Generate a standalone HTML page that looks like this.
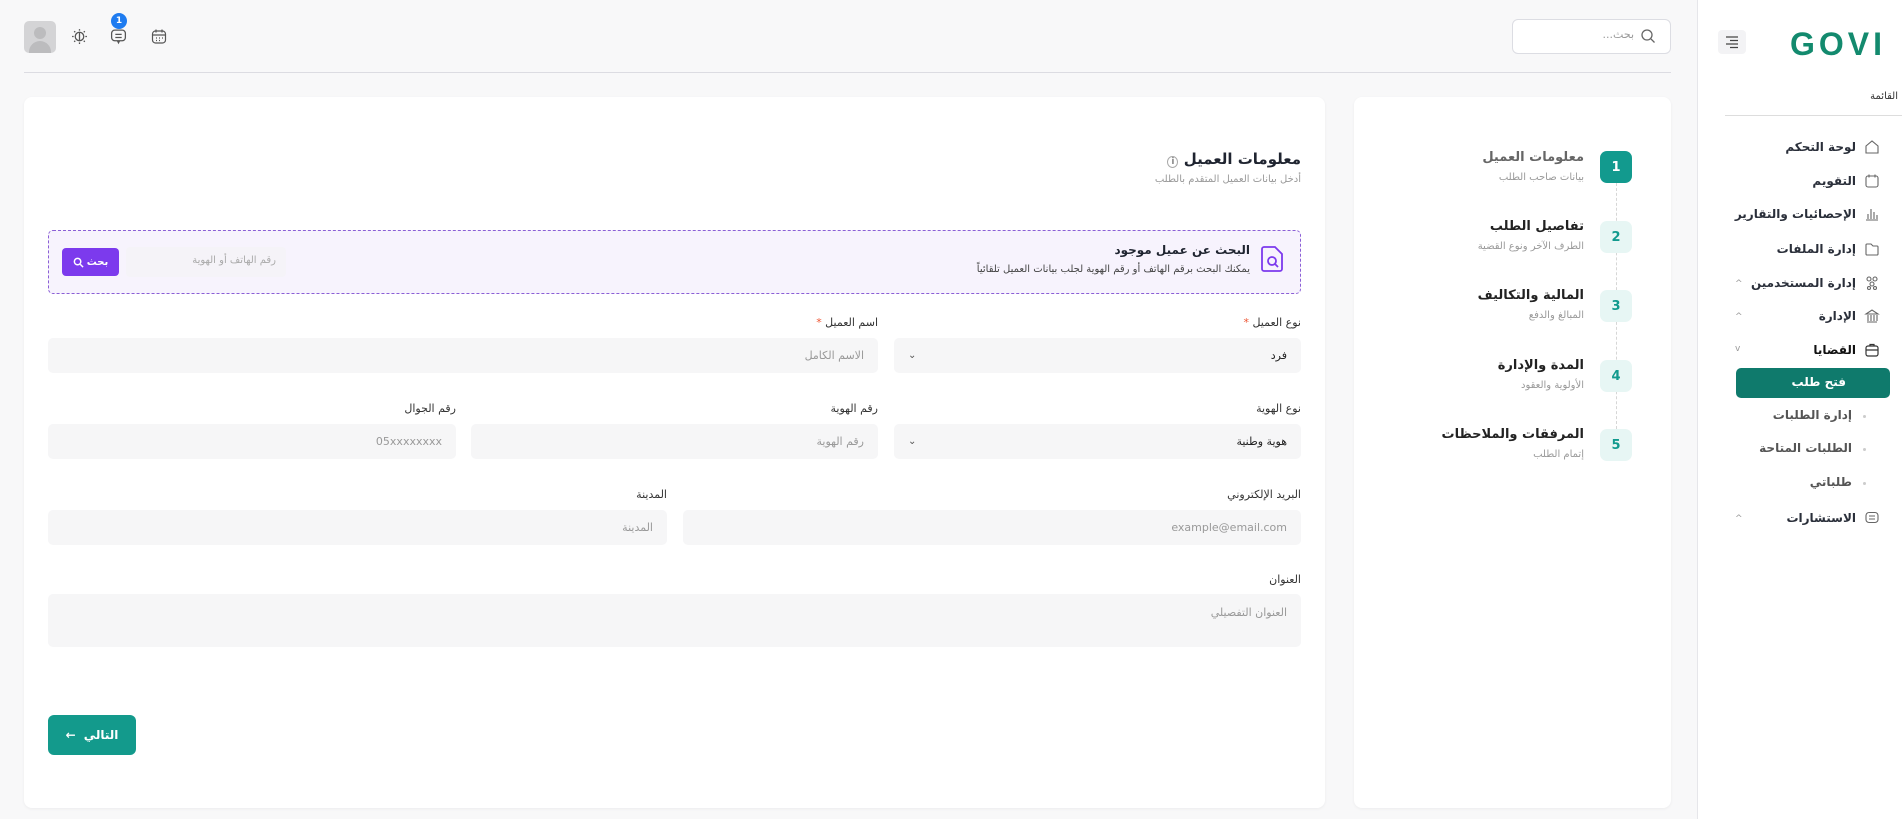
<!DOCTYPE html>
<html lang="ar" dir="rtl"><head><meta charset="utf-8">
<style>
*{box-sizing:border-box;margin:0;padding:0}
body{width:1902px;height:819px;overflow:hidden;background:#f8f8f9;font-family:"DejaVu Sans","Liberation Sans",sans-serif;color:#1f2430;position:relative}
.abs{position:absolute}
.sidebar{left:1697px;top:0;width:205px;height:819px;background:#fff;border-left:1px solid #e6e6ea}
.mi{position:absolute;right:22px;font-size:12px;font-weight:bold;color:#2a2f3a;display:flex;align-items:center;gap:8px;direction:rtl}
.mi svg{width:16px;height:16px}
.chev{position:absolute;left:1735px;font-size:9px;color:#999}
.sub{position:absolute;right:50px;font-size:12px;color:#555;font-weight:bold}
.sub:before{content:"";position:absolute;right:-14px;top:7px;width:3px;height:3px;border-radius:50%;background:#ccc}
.card{background:#fff;border-radius:8px;box-shadow:0 1px 3px rgba(0,0,0,.05)}
.lbl{position:absolute;font-size:11px;color:#333;text-align:right}
.inp{position:absolute;background:#f6f6f7;border-radius:5px;height:35px;font-size:11px;color:#999;padding:0 14px;display:flex;align-items:center}
.step{position:absolute;width:32px;height:32px;border-radius:7px;background:#e7f6f4;color:#129a8e;font-size:13px;font-weight:bold;display:flex;align-items:center;justify-content:center}
.st{position:absolute;right:318px;text-align:right}
.st b{display:block;font-size:13px;color:#222}
.st span{font-size:10px;color:#999}
.req{color:#e53}
</style></head><body>

<!-- top bar -->
<div class="abs" style="left:24px;top:72px;width:1647px;height:1px;background:#dcdce2"></div>
<div class="abs" style="left:1512px;top:19px;width:159px;height:35px;border:1px solid #dcdde3;border-radius:6px;background:#fff"></div>
<svg class="abs" style="left:1640px;top:28px" width="16" height="16" viewBox="0 0 16 16" fill="none" stroke="#666" stroke-width="1.3"><circle cx="7" cy="7" r="5"/><path d="M11 11l3.5 3.5"/></svg>
<div class="abs" style="right:268px;top:28px;font-size:11px;color:#999">بحث...</div>
<div class="abs" style="left:24px;top:21px;width:32px;height:32px;border-radius:5px;background:#d4d4d6;overflow:hidden"><div style="position:absolute;left:10px;top:6px;width:12px;height:12px;border-radius:50%;background:#bcbcbe"></div><div style="position:absolute;left:5px;top:20px;width:22px;height:16px;border-radius:11px 11px 0 0;background:#bcbcbe"></div></div>
<svg class="abs" style="left:71px;top:28px" width="17" height="17" viewBox="0 0 16 16" fill="none" stroke="#555" stroke-width="1.2"><circle cx="8" cy="8" r="4"/><path d="M8 4v8" /><path d="M8 1v1.5M8 13.5V15M1 8h1.5M13.5 8H15M3 3l1 1M12 12l1 1M3 13l1-1M12 4l1-1"/></svg>
<svg class="abs" style="left:110px;top:28px" width="17" height="18" viewBox="0 0 16 17" fill="none" stroke="#555" stroke-width="1.2"><rect x="1.5" y="2" width="13" height="10" rx="3"/><path d="M5 6h6M5 9h6M7 12l1 2 1-2"/></svg>
<div class="abs" style="left:111px;top:13px;width:16px;height:16px;border-radius:50%;background:#1f7cf0;color:#fff;font-size:9px;font-weight:bold;text-align:center;line-height:16px">1</div>
<svg class="abs" style="left:151px;top:28px" width="16" height="17" viewBox="0 0 16 17" fill="none" stroke="#555" stroke-width="1.2"><rect x="1.5" y="3" width="13" height="12" rx="3"/><path d="M1.5 7h13M5 1.5v3M11 1.5v3M5 10h1M8 10h1M11 10h1M5 12.5h1M8 12.5h1"/></svg>

<!-- sidebar -->
<div class="abs sidebar"></div>
<div class="abs" style="left:1718px;top:30px;width:28px;height:24px;background:#f3f3f5;border-radius:4px"></div>
<svg class="abs" style="left:1724px;top:35px" width="16" height="14" viewBox="0 0 16 14" stroke="#444" stroke-width="1.2"><path d="M2 2h12M6 5.5h8M2 9h12M6 12.5h8"/></svg>
<div class="abs" style="left:1790px;top:26px;font-family:'Liberation Sans',sans-serif;font-size:32px;letter-spacing:4px;color:#138a6e;font-weight:bold;direction:ltr;line-height:36px">GOVI</div>
<div class="abs" style="right:4px;top:91px;font-size:10px;color:#333">القائمة</div>
<div class="abs" style="left:1725px;top:115px;width:177px;height:1px;background:#ddd"></div>
<div class="mi" style="top:139px">
<svg viewBox="0 0 16 16" fill="none" stroke="#666" stroke-width="1.1"><path d="M2 7l6-5 6 5v7H2z"/></svg>لوحة التحكم</div>
<div class="mi" style="top:173px"><svg viewBox="0 0 16 16" fill="none" stroke="#666" stroke-width="1.1"><rect x="2" y="3" width="12" height="11" rx="2"/><path d="M5 1.5v3M11 1.5v3"/></svg>التقويم</div>
<div class="mi" style="top:206px"><svg viewBox="0 0 16 16" fill="none" stroke="#666" stroke-width="1.1"><path d="M2 14h12M4 13V8M7 13V3M10 13V6M13 13V9"/></svg>الإحصائيات والتقارير</div>
<div class="mi" style="top:241px"><svg viewBox="0 0 16 16" fill="none" stroke="#666" stroke-width="1.1"><path d="M2 4a1 1 0 011-1h4l2 2h4a1 1 0 011 1v7a1 1 0 01-1 1H3a1 1 0 01-1-1z"/></svg>إدارة الملفات</div>
<div class="mi" style="top:275px"><svg viewBox="0 0 16 16" fill="none" stroke="#666" stroke-width="1.1"><circle cx="5" cy="4" r="2"/><circle cx="11" cy="4" r="2"/><circle cx="8" cy="9" r="2"/><circle cx="5" cy="13" r="1.5"/><circle cx="11" cy="13" r="1.5"/></svg>إدارة المستخدمين</div><div class="chev" style="top:279px">^</div>
<div class="mi" style="top:308px"><svg viewBox="0 0 16 16" fill="none" stroke="#666" stroke-width="1.1"><path d="M2 6l6-4 6 4zM3 14h10M4 7v6M7 7v6M10 7v6M13 7v6"/></svg>الإدارة</div><div class="chev" style="top:312px">^</div>
<div class="mi" style="top:342px;color:#111"><svg viewBox="0 0 16 16" fill="none" stroke="#333" stroke-width="1.2"><rect x="2" y="4" width="12" height="10" rx="2"/><path d="M6 4V2.5h4V4M2 8h12"/></svg>القضايا</div><div class="chev" style="top:344px">v</div>
<div class="abs" style="left:1736px;top:368px;width:154px;height:30px;background:#0f7a6c;border-radius:5px"></div>
<div class="abs" style="right:56px;top:375px;color:#fff;font-size:12px;font-weight:bold">فتح طلب</div>
<div class="sub" style="top:408px">إدارة الطلبات</div>
<div class="sub" style="top:441px">الطلبات المتاحة</div>
<div class="sub" style="top:475px">طلباتي</div>
<div class="mi" style="top:510px"><svg viewBox="0 0 16 16" fill="none" stroke="#666" stroke-width="1.1"><rect x="2" y="2.5" width="12" height="10" rx="3"/><path d="M5 6h6M5 9h6"/></svg>الاستشارات</div><div class="chev" style="top:514px">^</div>

<!-- steps card -->
<div class="abs card" style="left:1354px;top:97px;width:317px;height:711px"></div>
<div class="abs" style="left:1616px;top:183px;width:0;height:246px;border-left:1px dashed #d6d6d6"></div>
<div class="step" style="left:1600px;top:151px;background:#129a8e;color:#fff">1</div>
<div class="step" style="left:1600px;top:221px">2</div>
<div class="step" style="left:1600px;top:290px">3</div>
<div class="step" style="left:1600px;top:360px">4</div>
<div class="step" style="left:1600px;top:429px">5</div>
<div class="st" style="top:150px"><b style="color:#666">معلومات العميل</b><span>بيانات صاحب الطلب</span></div>
<div class="st" style="top:219px"><b>تفاصيل الطلب</b><span>الطرف الآخر ونوع القضية</span></div>
<div class="st" style="top:288px"><b>المالية والتكاليف</b><span>المبالغ والدفع</span></div>
<div class="st" style="top:358px"><b>المدة والإدارة</b><span>الأولوية والعقود</span></div>
<div class="st" style="top:427px"><b>المرفقات والملاحظات</b><span>إتمام الطلب</span></div>

<!-- main card -->
<div class="abs card" style="left:24px;top:97px;width:1301px;height:711px"></div>
<div class="abs" style="right:601px;top:150px;font-size:15px;font-weight:bold">معلومات العميل <span style="font-size:9px;color:#888;border:1px solid #aaa;border-radius:50%;padding:0 3px">i</span></div>
<div class="abs" style="right:601px;top:174px;font-size:10px;color:#999">أدخل بيانات العميل المتقدم بالطلب</div>

<div class="abs" style="left:48px;top:230px;width:1253px;height:64px;border:1px dashed #8b5fd6;border-radius:5px;background:#f7f3fd"></div>
<svg class="abs" style="left:1260px;top:244px" width="26" height="30" viewBox="0 0 26 30" fill="none" stroke="#7c3aed" stroke-width="1.8"><path d="M4 3h11l7 7v15a2 2 0 01-2 2H4a2 2 0 01-2-2V5a2 2 0 012-2z"/><circle cx="12" cy="17" r="4"/><path d="M15 20l3 3"/></svg>
<div class="abs" style="right:652px;top:243px;font-size:12px;font-weight:bold">البحث عن عميل موجود</div>
<div class="abs" style="right:652px;top:264px;font-size:10px;color:#444">يمكنك البحث برقم الهاتف أو رقم الهوية لجلب بيانات العميل تلقائياً</div>
<div class="abs" style="left:126px;top:247px;width:160px;height:30px;background:#f5f3f8;border-radius:4px"></div>
<div class="abs" style="right:1626px;top:255px;font-size:10px;color:#aaa">رقم الهاتف أو الهوية</div>
<div class="abs" style="left:62px;top:248px;width:57px;height:28px;background:#7c3aed;border-radius:4px;color:#fff;font-size:10px;font-weight:bold;display:flex;align-items:center;justify-content:center;gap:3px">بحث <svg width="11" height="11" viewBox="0 0 12 12" fill="none" stroke="#fff" stroke-width="1.6"><circle cx="5" cy="5" r="3.5"/><path d="M8 8l3 3"/></svg></div>

<div class="lbl" style="right:601px;top:316px">نوع العميل <span class="req">*</span></div>
<div class="lbl" style="right:1024px;top:316px">اسم العميل <span class="req">*</span></div>
<div class="inp" style="left:894px;top:338px;width:407px;color:#222">فرد<span style="margin-right:auto;color:#555;font-size:10px">⌄</span></div>
<div class="inp" style="left:48px;top:338px;width:830px">الاسم الكامل</div>

<div class="lbl" style="right:601px;top:402px">نوع الهوية</div>
<div class="lbl" style="right:1024px;top:402px">رقم الهوية</div>
<div class="lbl" style="right:1446px;top:402px">رقم الجوال</div>
<div class="inp" style="left:894px;top:424px;width:407px;color:#222">هوية وطنية<span style="margin-right:auto;color:#555;font-size:10px">⌄</span></div>
<div class="inp" style="left:471px;top:424px;width:407px">رقم الهوية</div>
<div class="inp" style="left:48px;top:424px;width:408px">05xxxxxxxx</div>

<div class="lbl" style="right:601px;top:488px">البريد الإلكتروني</div>
<div class="lbl" style="right:1235px;top:488px">المدينة</div>
<div class="inp" style="left:683px;top:510px;width:618px">example@email.com</div>
<div class="inp" style="left:48px;top:510px;width:619px">المدينة</div>

<div class="lbl" style="right:601px;top:573px">العنوان</div>
<div class="inp" style="left:48px;top:594px;width:1253px;height:53px;align-items:flex-start;padding-top:12px">العنوان التفصيلي</div>

<div class="abs" style="left:48px;top:715px;width:88px;height:40px;background:#139a8c;border-radius:6px;color:#fff;font-size:12px;font-weight:bold;display:flex;align-items:center;justify-content:center;gap:8px">التالي <span>←</span></div>
</body></html>
